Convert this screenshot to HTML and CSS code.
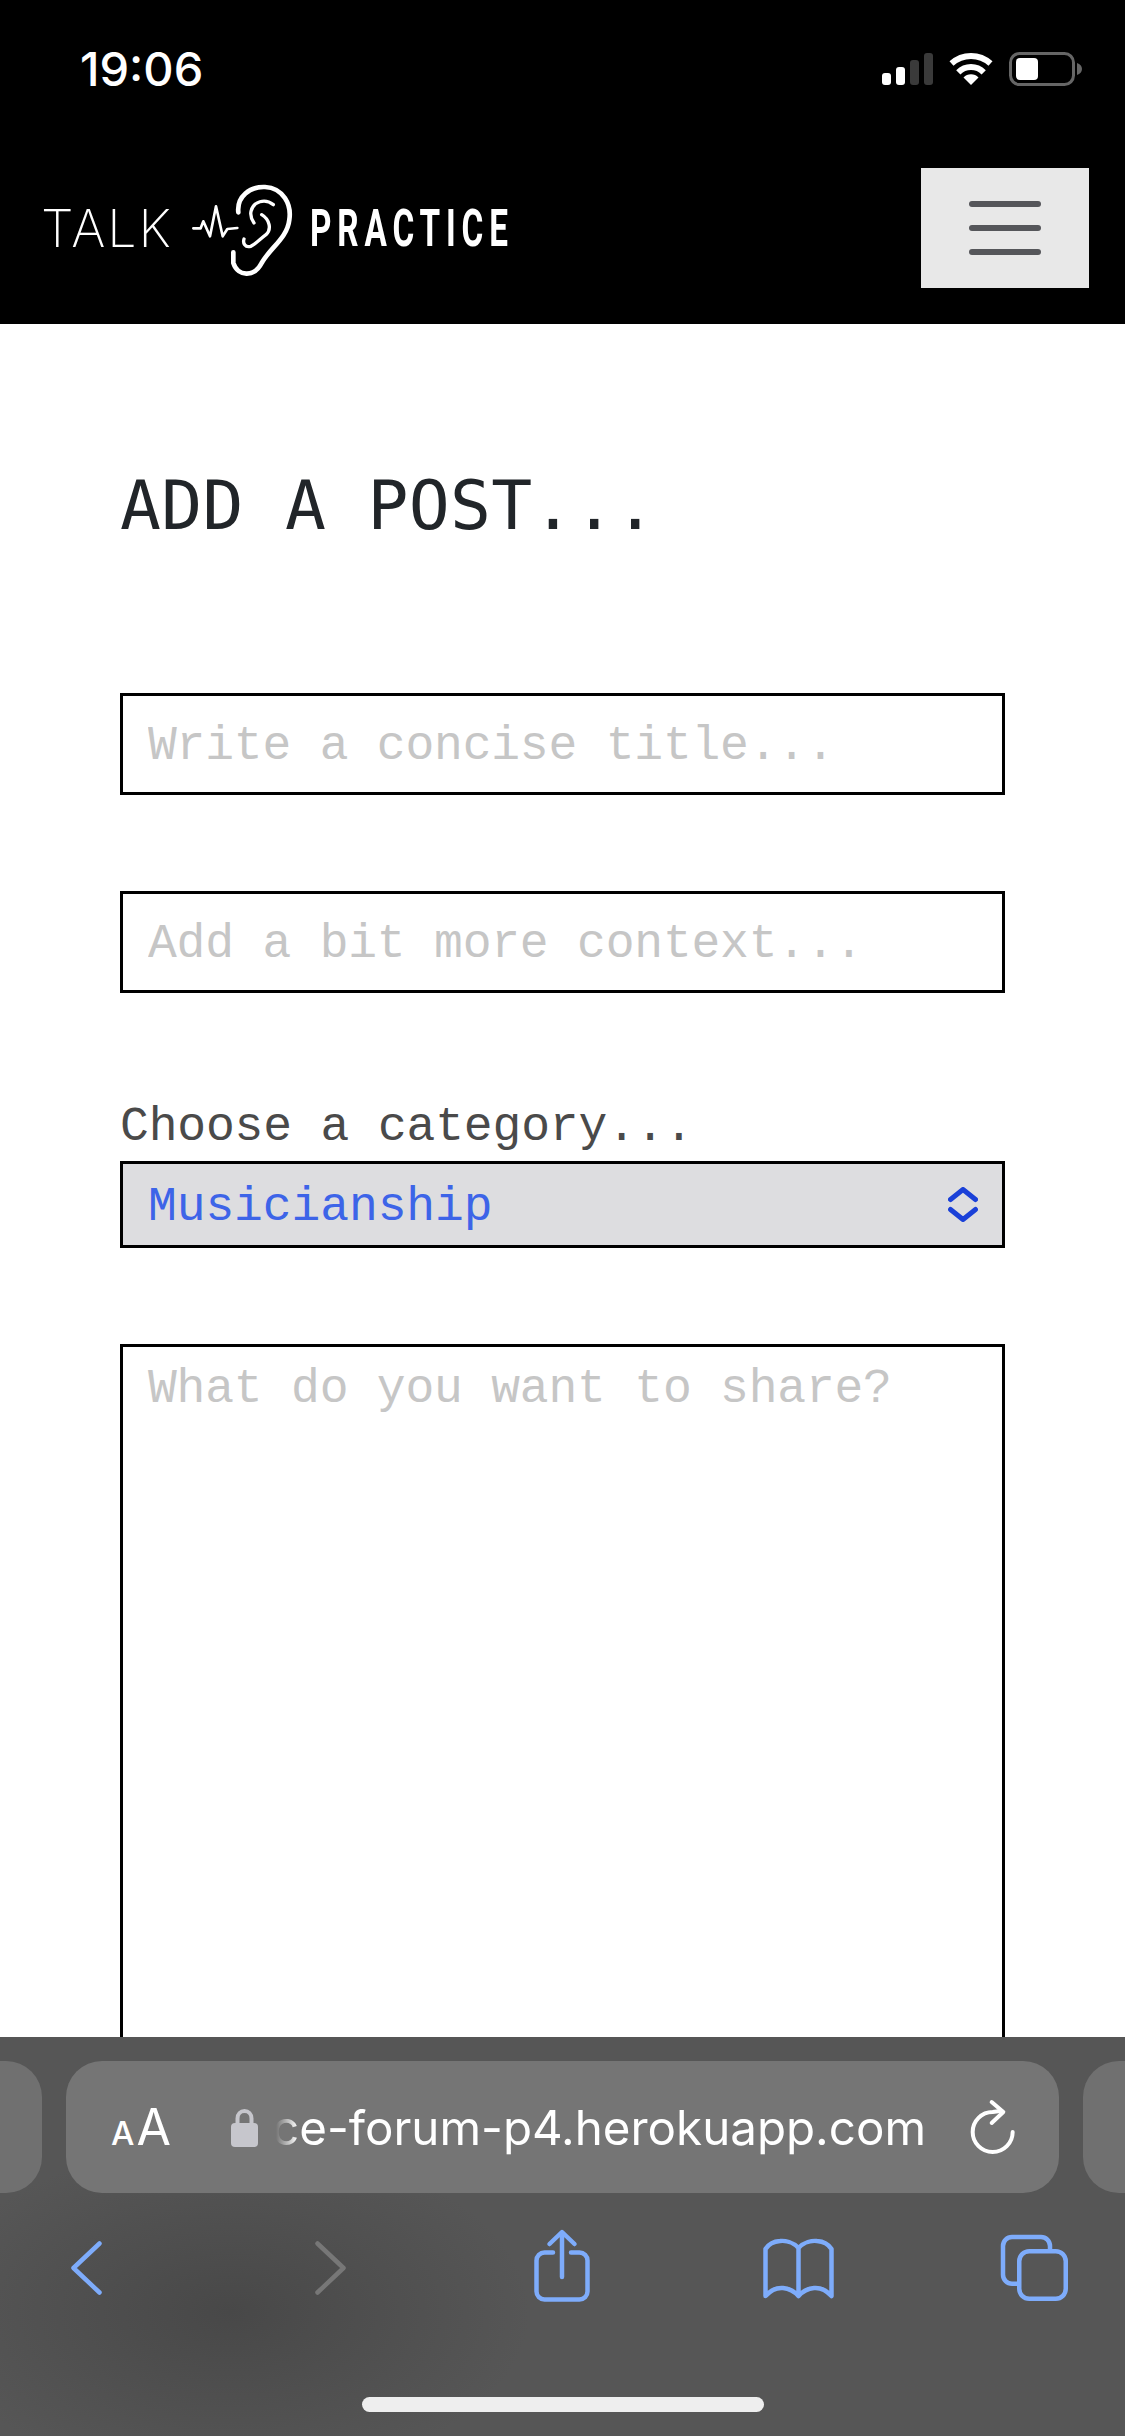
FILE: index.html
```html
<!DOCTYPE html>
<html lang="en">
  <head>
    <meta charset="UTF-8" />
    <title>Add a post</title>
    <link rel="stylesheet" href="styles.css">
  </head>
  <body>
    <header class="topbar">
      <div class="status">
        <span class="clock">19:06</span>
        <svg class="status-icons" viewBox="0 0 200 34" width="200" height="34">
          <rect class="bar-on" x="0" y="21" width="9" height="12" rx="3" />
          <rect class="bar-on" x="14" y="15" width="9" height="18" rx="3" />
          <rect class="bar-off" x="28" y="8" width="9" height="25" rx="3" />
          <rect class="bar-off" x="42" y="1" width="9" height="32" rx="3" />
          <path class="wifi" d="M69.5 11.5A29 29 0 0 1 108.5 11.5" />
          <path class="wifi" d="M76.3 20.3A18 18 0 0 1 101.7 20.3" />
          <path class="wifi-dot" d="M89 33L81.5 25.5A10.5 10.5 0 0 1 96.5 25.5Z" />
          <rect class="batt" x="128.5" y="1.5" width="63" height="31" rx="9" />
          <rect class="batt-fill" x="134" y="6" width="22" height="22" rx="4" />
          <path class="batt-nub" d="M195 11C198 12 200 14 200 17C200 20 198 22 195 23Z" />
        </svg>
      </div>
      <nav class="nav">
        <a class="logo" href="#">
          <span class="logo-talk">TALK</span>
          <svg class="logo-ear" viewBox="0 0 390 330" width="130" height="110">
            <path class="wave" d="M40 166H62L70 145L90 190L108 100L128 190L142 168L172 165" />
            <path class="ear" d="M175 118C170 70 210 40 255 42C310 45 335 95 328 140C322 195 270 225 245 270C225 310 175 315 160 270V238" />
            <path class="ear-in" d="M280 95C255 75 220 85 213 115C210 130 215 140 222 150" />
            <path class="ear-in" d="M245 125C270 140 275 170 258 185C240 198 225 215 212 220C195 225 188 210 192 198" />
          </svg>
          <span class="logo-practice">PRACTICE</span>
        </a>
        <button class="menu-btn" type="button">
          <span></span>
          <span></span>
          <span></span>
        </button>
      </nav>
    </header>

    <main class="content">
      <h1>ADD A POST...</h1>
      <form class="post-form">
        <input class="field" type="text" placeholder="Write a concise title...">
        <input class="field" type="text" placeholder="Add a bit more context...">
        <div class="category">
          <label for="category">Choose a category...</label>
          <div class="select-wrap">
            <select id="category" class="select">
              <option>Musicianship</option>
            </select>
            <svg class="select-arrows" viewBox="0 0 30 35" width="30" height="35">
              <path d="M2.5 12.5L15 2.5L27.5 12.5" />
              <path d="M2.5 22.500L15 32.500L27.5 22.500" />
            </svg>
          </div>
        </div>
        <textarea class="field field-area" placeholder="What do you want to share?"></textarea>
      </form>
    </main>

    <footer class="browser">
      <div class="url-row">
        <div class="side-pill"></div>
        <div class="url-pill">
          <div class="aa">
            <span class="aa-small">A</span>
            <span class="aa-big">A</span>
          </div>
          <svg class="lock" viewBox="0 0 27 39" width="27" height="39">
            <path class="lock-arc" d="M6.5 18V10.5C6.5 6 9.5 3 13.5 3S20.500 6 20.500 10.500V18" />
            <rect class="lock-body" x="0" y="15" width="27" height="24" rx="4" />
          </svg>
          <div class="url-text">ce-forum-p4.herokuapp.com</div>
          <svg class="reload" viewBox="0 0 240 240" width="80" height="80">
            <path d="M188 135A60 60 0 1 1 128 75L150 72" />
            <path d="M125 45L160 75L125 108" />
          </svg>
        </div>
        <div class="side-pill"></div>
      </div>
      <div class="tools">
        <svg class="tool tool-back" viewBox="0 0 31 72" width="31" height="72">
          <path d="M28.500 13.500L2.500 38L28.500 62.500" />
        </svg>
        <svg class="tool tool-fwd off" viewBox="0 0 31 72" width="31" height="72">
          <path d="M2.500 13.500L28.500 38L2.500 62.500" />
        </svg>
        <svg class="tool tool-share" viewBox="0 0 56 72" width="56" height="72">
          <path d="M19 22.500H10.500A8 8 0 0 0 2.500 30.500V61.500A8 8 0 0 0 10.500 69.500H45.500A8 8 0 0 0 53.500 61.500V30.500A8 8 0 0 0 45.500 22.500H37" />
          <path d="M28 3V47M15.500 14L28 2L40.500 14" />
        </svg>
        <svg class="tool tool-book" viewBox="0 0 71 72" width="71" height="72">
          <path d="M35.500 18C30 12 22 10.500 17 11C10 11.500 5 15 2.500 19V66C8 60 15 57.500 20 58C26 58.500 31 61 35.500 66C40 61 45 58.500 51 58C56 57.500 63 60 68.500 66V19C66 15 61 11.500 54 11C49 10.500 41 12 35.500 18ZM35.500 18V66" />
        </svg>
        <svg class="tool tool-tabs" viewBox="0 0 67 72" width="67" height="72">
          <path d="M16 53.700H11A9 9 0 0 1 2 44.700V16A9 9 0 0 1 11 7H40A9 9 0 0 1 49 16V19" />
          <rect x="18.250" y="21.250" width="46.500" height="47.500" rx="10" />
        </svg>
      </div>
      <div class="home-bar"></div>
    </footer>
  </body>
</html>
```

FILE: styles.css
```css
* {
  box-sizing: border-box;
}
body {
  margin: 0;
  width: 1125px;
  height: 2436px;
  display: flex;
  flex-direction: column;
  overflow: hidden;
  background: #fff;
  font-family: "Liberation Mono", monospace;
}

/* black top area */
.topbar {
  height: 324px;
  flex-shrink: 0;
  background: #000;
}
.status {
  height: 136px;
  display: flex;
  align-items: center;
  justify-content: space-between;
  padding: 0 43px 0 80px;
}
.clock {
  color: #fff;
  font-family: Inter, sans-serif;
  font-size: 47px;
  font-weight: 500;
}
.status-icons {
  margin-top: 2px;
}
.bar-on,
.batt-fill,
.wifi-dot {
  fill: #fff;
}
.bar-off {
  fill: #3a3a3a;
}
.wifi {
  fill: none;
  stroke: #fff;
  stroke-width: 6;
}
.batt {
  fill: none;
  stroke: #666;
  stroke-width: 3;
}
.batt-nub {
  fill: #666;
}
.nav {
  display: flex;
  align-items: center;
  justify-content: space-between;
  padding: 32px 36px 36px 41px;
}
.logo {
  display: flex;
  align-items: center;
  color: #fff;
  text-decoration: none;
}
.logo-talk {
  width: 139px;
  font-family: Inter, sans-serif;
  font-size: 52px;
  font-weight: 200;
  letter-spacing: 2px;
}
.logo-practice {
  width: 198px;
  font-family: Roboto, sans-serif;
  font-size: 51px;
  font-weight: 700;
  letter-spacing: 9px;
  white-space: nowrap;
  transform: scaleX(0.652);
  transform-origin: left center;
}
.wave,
.ear,
.ear-in {
  fill: none;
  stroke: #fff;
  stroke-linecap: round;
  stroke-linejoin: round;
}
.wave {
  stroke-width: 8;
}
.ear {
  stroke-width: 14;
}
.ear-in {
  stroke-width: 10;
}
.menu-btn {
  width: 168px;
  height: 120px;
  padding: 0;
  border: 0;
  background: #e8e8e8;
  display: flex;
  flex-direction: column;
  align-items: center;
  justify-content: center;
  gap: 18px;
}
.menu-btn span {
  width: 72px;
  height: 6px;
  border-radius: 3px;
  background: #55565a;
}

/* form */
.content {
  flex: 1;
  min-height: 0;
  overflow: hidden;
  padding: 141px 120px 0;
}
h1 {
  margin: 0 0 146px;
  font-family: "DejaVu Sans Mono", monospace;
  font-size: 68px;
  font-weight: 400;
  line-height: 82px;
  letter-spacing: 0.3px;
  color: #212529;
}
.post-form {
  display: flex;
  flex-direction: column;
  gap: 96px;
}
.field {
  display: block;
  width: 100%;
  height: 102px;
  padding: 3px 25px 0;
  border: 3px solid #000;
  border-radius: 0;
  background: #fff;
  font-family: "Liberation Mono", monospace;
  font-size: 48px;
  letter-spacing: -0.2px;
  outline: none;
}
.field::placeholder {
  color: #c6c6c6;
  opacity: 1;
}
.field-area {
  height: 800px;
  padding-top: 15px;
  line-height: 54px;
  resize: none;
}
label {
  display: block;
  height: 72px;
  padding-top: 2px;
  line-height: 72px;
  font-size: 48px;
  letter-spacing: -0.15px;
  color: #4a4a4a;
}
.select-wrap {
  position: relative;
}
.select {
  display: block;
  width: 100%;
  height: 87px;
  padding: 5px 25px 0;
  border: 3px solid #000;
  border-radius: 0;
  appearance: none;
  background: #dddde0;
  font-family: "Liberation Mono", monospace;
  font-size: 48px;
  letter-spacing: -0.1px;
  color: #3d64e8;
}
.select-arrows {
  position: absolute;
  right: 27px;
  top: 26px;
}
.select-arrows path {
  fill: none;
  stroke: #1a40d8;
  stroke-width: 5;
  stroke-linecap: round;
  stroke-linejoin: round;
}

/* safari bar */
.browser {
  height: 399px;
  flex-shrink: 0;
  padding-top: 24px;
  overflow: hidden;
  background:
    radial-gradient(ellipse 300px 170px at 230px 275px, #484848, rgba(72, 72, 72, 0)),
    #565656;
}
.url-row {
  display: flex;
  gap: 24px;
  height: 132px;
  margin-left: -58px;
}
.side-pill {
  width: 100px;
  flex-shrink: 0;
  border-radius: 36px;
  background: #707070;
}
.url-pill {
  width: 993px;
  flex-shrink: 0;
  display: flex;
  align-items: center;
  padding-left: 45px;
  border-radius: 36px;
  background: #757575;
  color: #fff;
}
.aa {
  width: 60px;
  display: flex;
  align-items: baseline;
  gap: 2px;
  font-family: Inter, sans-serif;
}
.aa-small {
  font-size: 33px;
  font-weight: 500;
}
.aa-big {
  font-size: 50px;
}
.lock {
  margin-left: 60px;
}
.lock-arc {
  fill: none;
  stroke: #c6c6cc;
  stroke-width: 4;
}
.lock-body {
  fill: #c6c6cc;
}
.url-text {
  width: 654px;
  margin-left: 14px;
  text-align: right;
  font-family: Inter, sans-serif;
  font-size: 47.500px;
  white-space: nowrap;
  mask-image: linear-gradient(to right, transparent 4px, #000 26px);
}
.reload {
  margin-left: 24px;
}
.reload path {
  fill: none;
  stroke: #fff;
  stroke-width: 12;
  stroke-linecap: round;
  stroke-linejoin: round;
}
.tools {
  display: flex;
  margin-top: 37px;
  padding-left: 71px;
}
.tool {
  flex-shrink: 0;
  overflow: visible;
}
.tool path,
.tool rect {
  fill: none;
  stroke: #7eacfb;
  stroke-width: 4.500;
  stroke-linecap: round;
  stroke-linejoin: round;
}
.tool.off path {
  stroke: #777;
}
.tool-fwd {
  margin-left: 213px;
}
.tool-share {
  margin-left: 188px;
}
.tool-book {
  margin-left: 173px;
}
.tool-tabs {
  margin-left: 167px;
}
.home-bar {
  width: 402px;
  height: 15px;
  margin: 95px auto 0;
  border-radius: 8px;
  background: #eee;
}
```
